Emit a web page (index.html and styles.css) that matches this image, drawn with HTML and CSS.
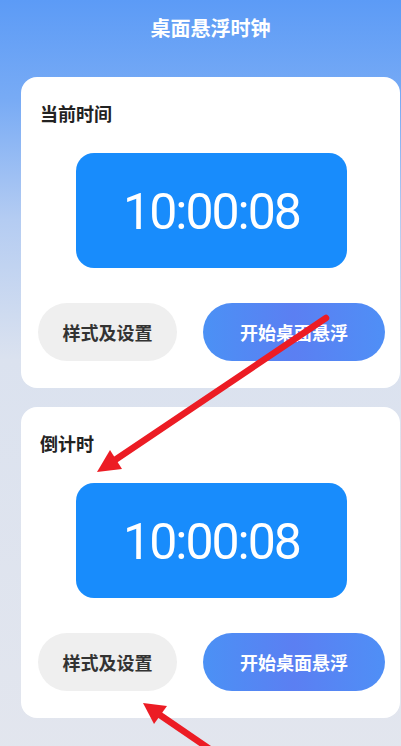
FILE: index.html
```html
<!DOCTYPE html>
<html lang="zh-CN">
<head>
    <meta charset="UTF-8">
    <meta name="viewport" content="width=device-width, initial-scale=1.0">
    <title>桌面悬浮时钟</title>
    <link rel="stylesheet" href="styles.css">
</head>
<body>
    <div class="page">
        <h1 class="title">桌面悬浮时钟</h1>

        <div class="card">
            <h2 class="card-title">当前时间</h2>
            <div class="clock">10:00:08</div>
            <div class="actions">
                <button class="btn btn-settings">样式及设置</button>
                <button class="btn btn-float">开始桌面悬浮</button>
            </div>
        </div>

        <div class="card">
            <h2 class="card-title">倒计时</h2>
            <div class="clock">10:00:08</div>
            <div class="actions">
                <button class="btn btn-settings">样式及设置</button>
                <button class="btn btn-float">开始桌面悬浮</button>
            </div>
        </div>

        <!-- annotation arrows drawn over the screenshot -->
        <svg class="arrows" width="401" height="746" viewBox="0 0 401 746">
            <line x1="326" y1="318" x2="112" y2="462" stroke="#ec1c24" stroke-width="6.5" stroke-linecap="round"/>
            <polygon points="97,472 122,469 110,450" fill="#ec1c24"/>
            <line x1="214" y1="752" x2="157" y2="713" stroke="#ec1c24" stroke-width="6.5"/>
            <polygon points="143,703 167,706 154,724" fill="#ec1c24"/>
        </svg>
    </div>
</body>
</html>
```

FILE: styles.css
```css
html, body {
    margin: 0;
    padding: 0;
}
body {
    font-family: "Noto Sans CJK SC", "Noto Sans", sans-serif;
    background: linear-gradient(180deg, #5c9bf6 0%, #78abf5 100px, #b4ccf2 220px, #dbe2ef 360px, #e3e6ee 100%);
    min-height: 746px;
    width: 401px;
    overflow: hidden;
}
.page {
    position: relative;
    padding: 0 1px 40px 21px;
}
.title {
    margin: 0;
    height: 77px;
    padding-top: 14px;
    box-sizing: border-box;
    line-height: 28px;
    font-size: 20px;
    font-weight: bold;
    color: #fff;
    text-align: center;
}
.card {
    background: #fff;
    border-radius: 16px;
    padding: 24px 15px 27px 17px;
    margin-bottom: 19px;
}
.card-title {
    margin: 0 0 0 2px;
    font-size: 18px;
    font-weight: bold;
    line-height: 24px;
    color: #222;
}
.clock {
    width: 271px;
    height: 115px;
    margin: 28px auto 0;
    padding-top: 3px;
    box-sizing: border-box;
    background: #188cfc;
    border-radius: 18px;
    color: #fff;
    font-family: Roboto, "Noto Sans", sans-serif;
    font-weight: 400;
    font-size: 50px;
    letter-spacing: -2px;
    display: flex;
    align-items: center;
    justify-content: center;
}
.actions {
    display: flex;
    justify-content: space-between;
    margin-top: 35px;
}
.btn {
    height: 58px;
    border: none;
    border-radius: 29px;
    font-family: "Noto Sans CJK SC", sans-serif;
    font-size: 18px;
    font-weight: bold;
    padding: 0;
}
.btn-settings {
    width: 139px;
    background: #efefef;
    color: #333;
}
.btn-float {
    width: 182px;
    background: linear-gradient(90deg, #4b91f5 0%, #5b7ff2 50%, #4f8ff6 100%);
    color: #fff;
}
.arrows {
    position: absolute;
    left: 0;
    top: 0;
    pointer-events: none;
}
```
